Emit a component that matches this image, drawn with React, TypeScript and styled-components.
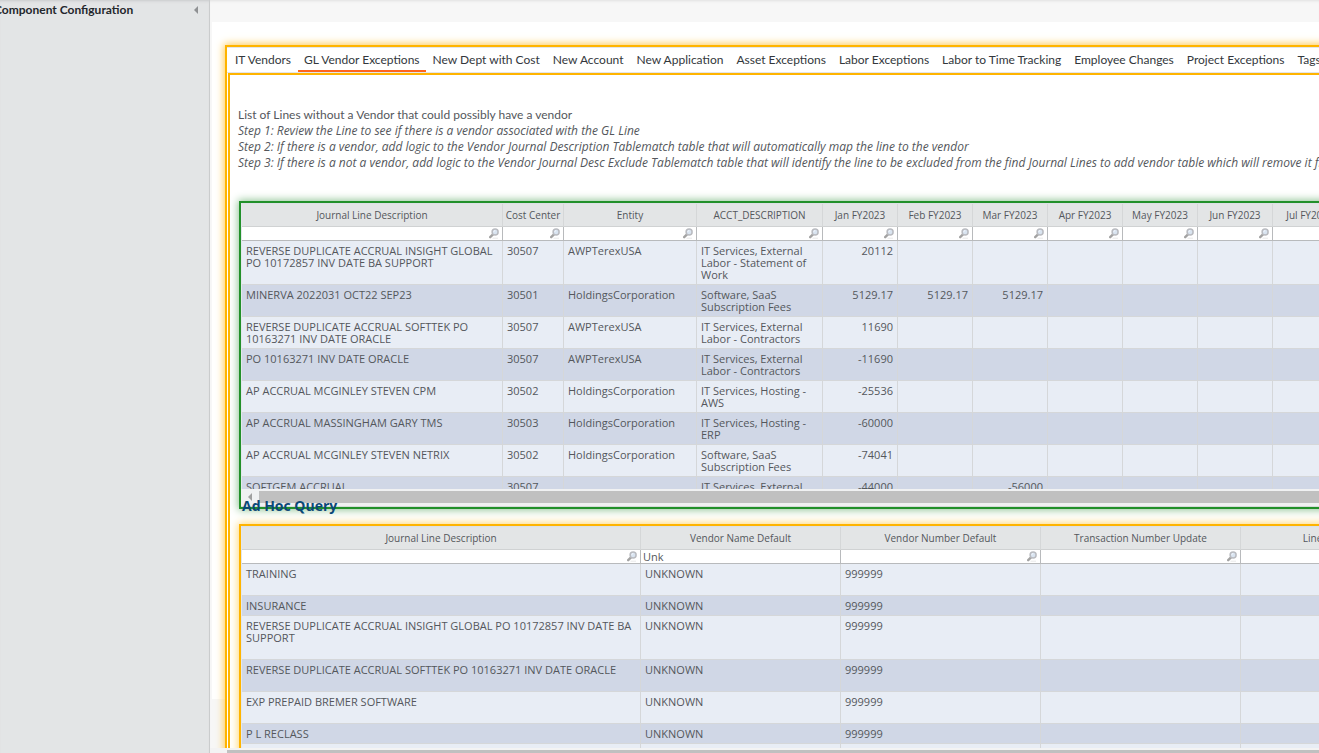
import React from "react";
import styled, { createGlobalStyle } from "styled-components";

const GlobalStyle = createGlobalStyle`
  *, *::before, *::after { box-sizing: border-box; }
  html, body { margin: 0; height: 100%; overflow: hidden; background: #fff; }
  body { font-family: "Open Sans", "Noto Sans", sans-serif; font-size: 12px; color: #54575c; }
`;

const Page = styled.div`
  display: flex;
  height: 100vh;
  overflow: hidden;
  background: #f7f7f7;
`;

const Sidebar = styled.aside`
  flex: 0 0 210px;
  background: #e3e5e6;
  border-right: 1px solid #cacccd;
  box-shadow: inset 0 3px 3px -2px #c8cacb;
  overflow: hidden;
`;

const SidebarHeader = styled.div`
  display: flex;
  align-items: center;
  justify-content: space-between;
  height: 20px;
  margin-left: -6px;
  padding-right: 11px;
`;

const SidebarTitle = styled.h1`
  margin: 0;
  font-family: Lato, "Open Sans", sans-serif;
  font-size: 12px;
  line-height: 20px;
  font-weight: 700;
  color: #23272c;
  white-space: nowrap;
`;

const CollapseButton = styled.button`
  display: flex;
  padding: 0;
  border: 0;
  background: none;
`;

const Main = styled.main`
  flex: 1;
  min-width: 0;
  display: flex;
  flex-direction: column;
  box-shadow: inset 0 3px 3px -2px #e0e0e0;
`;

const Workspace = styled.div`
  flex: 1;
  min-height: 0;
  overflow: hidden;
  padding: 22px 0 0 2px;
`;

const Sheet = styled.div`
  height: 677px;
  padding: 23px 0 0 13px;
  background: #fff;
`;

const TabPanelFrame = styled.section`
  width: 1400px;
  height: 900px;
  border: 2px solid #ffb400;
  box-shadow: 0 0 8px 1px #ffc94d;
  background: #fff;
`;

const Tabs = styled.nav`
  display: flex;
  gap: 1px;
  height: 26px;
  padding: 0 2px;
  border-top: 1px solid #e3e5ea;
  border-bottom: 1px solid #e3e5ea;
`;

const Tab = styled.button<{ $active?: boolean }>`
  padding: 2px 6px 0;
  border: 0;
  border-bottom: 2px solid ${(p) => (p.$active ? "#ff641e" : "transparent")};
  background: none;
  font-family: Lato, "Open Sans", sans-serif;
  font-size: 12px;
  line-height: 20px;
  color: #33373c;
  white-space: nowrap;
`;

const Panel = styled.div`
  height: 850px;
  margin-left: 1px;
  padding: 32px 0 0 8px;
  border: 2px solid #ffb400;
`;

const Notes = styled.div`
  height: 94px;
  font-size: 12px;
  line-height: 16px;
  white-space: nowrap;
`;

const NoteLine = styled.p`
  margin: 0;
`;

const NoteTitle = styled(NoteLine)`
  font-family: Lato, "Open Sans", sans-serif;
`;

const GridFrame = styled.section<{ $tone: string; $glow: string }>`
  margin-left: 1px;
  border: 2px solid ${(p) => p.$tone};
  box-shadow: 0 0 8px 1px ${(p) => p.$glow};
  background: #fff;
  overflow: hidden;
`;

const GridViewport = styled.div<{ $height: number }>`
  height: ${(p) => p.$height}px;
  overflow: hidden;
  border-left: 1px solid #e3e7ec;
  border-top: 1px solid #dde1e6;
`;

const Table = styled.table`
  table-layout: fixed;
  border-collapse: separate;
  border-spacing: 0;
  width: 1px;
`;

const HeadCell = styled.th`
  height: 23px;
  padding: 0 2px;
  background: #e3e5e6;
  border-right: 1px solid #d5d7d8;
  border-bottom: 1px solid #d0d2d3;
  font-size: 10px;
  line-height: 14px;
  font-weight: 400;
  text-align: center;
  white-space: nowrap;
`;

const FilterCell = styled.td`
  height: 14px;
  padding: 0;
  background: #fff;
  border-right: 1px solid #b8babc;
  border-bottom: 1px solid #b8babc;
`;

const FilterBox = styled.label`
  display: flex;
  align-items: center;
  height: 13px;
  padding-right: 3px;
`;

const FilterInput = styled.input`
  flex: 1;
  min-width: 0;
  width: 100%;
  height: 13px;
  padding: 0 2px;
  border: 0;
  outline: 0;
  background: transparent;
  font: inherit;
  font-size: 11px;
  color: #54575c;
`;

const Row = styled.tr<{ $height: number }>`
  height: ${(p) => p.$height}px;
  background: #e8edf5;
  &:nth-child(even) { background: #d0d7e6; }
`;

const Cell = styled.td<{ $numeric?: boolean }>`
  padding: 4px 4px 0;
  border-right: 1px solid #d5d7d9;
  border-bottom: 1px solid #d5d7d9;
  font-size: 11px;
  line-height: 12px;
  vertical-align: top;
  text-align: ${(p) => (p.$numeric ? "right" : "left")};
`;

const ScrollTrack = styled.div`
  display: flex;
  align-items: center;
  height: 18px;
  padding: 2px 0 3px;
  background: #f0f1f2;
  border-bottom: 1px solid #d5dbd8;
`;

const ScrollArrow = styled.button`
  display: flex;
  justify-content: center;
  width: 18px;
  padding: 0;
  border: 0;
  background: none;
`;

const ScrollThumb = styled.div`
  flex: 1;
  align-self: stretch;
  background: #c0c0c0;
`;

const QueryTitle = styled.h2`
  position: relative;
  z-index: 1;
  margin: -15px 0 6px 4px;
  font-size: 14px;
  line-height: 24px;
  font-weight: 700;
  color: #0b4877;
`;

const PageScroll = styled.div`
  height: 5px;
  padding: 2px 0 0 17px;
  background: #f3f3f3;
`;

const PageThumb = styled.div`
  height: 3px;
  background: #c0c0c0;
`;

const LeftArrow = ({ color, size }: { color: string; size: number }) => (
  <svg width={size / 2} height={size} viewBox="0 0 5 10" aria-hidden="true">
    <path d="M5 0V10L0 5Z" fill={color} />
  </svg>
);

const Magnifier = () => (
  <svg width="10" height="11" viewBox="0 0 10 11" aria-hidden="true">
    <path d="M1.2 9.2 4 6.4" stroke="#a3a3a3" strokeWidth="2.4" strokeLinecap="round" />
    <path d="M3.5 10.2H9" stroke="#e8e8e8" strokeWidth="1" />
    <circle cx="6.1" cy="4" r="3" fill="#d9e4f0" stroke="#b9bbc0" strokeWidth="1.5" />
    <path d="M4.8 3.8A1.5 1.5 0 0 1 6.2 2.5" stroke="#f6faff" strokeWidth="1" fill="none" />
  </svg>
);

type Column = { title: string; width: number; numeric?: boolean; filter?: string };
type GridRow = { height: number; cells: string[] };

const tabs = [
  "IT Vendors", "GL Vendor Exceptions", "New Dept with Cost", "New Account", "New Application",
  "Asset Exceptions", "Labor Exceptions", "Labor to Time Tracking", "Employee Changes",
  "Project Exceptions", "Tags",
];

const journalColumns: Column[] = [
  { title: "Journal Line Description", width: 261 },
  { title: "Cost Center", width: 61 },
  { title: "Entity", width: 133 },
  { title: "ACCT_DESCRIPTION", width: 126 },
  ...["Jan", "Feb", "Mar", "Apr", "May", "Jun", "Jul"].map((m) => ({
    title: `${m} FY2023`, width: 75, numeric: true,
  })),
];

const journalRows: GridRow[] = [
  { height: 44, cells: ["REVERSE DUPLICATE ACCRUAL INSIGHT GLOBAL PO 10172857 INV DATE BA SUPPORT", "30507", "AWPTerexUSA", "IT Services, External Labor - Statement of Work", "20112"] },
  { height: 32, cells: ["MINERVA 2022031 OCT22 SEP23", "30501", "HoldingsCorporation", "Software, SaaS Subscription Fees", "5129.17", "5129.17", "5129.17"] },
  { height: 32, cells: ["REVERSE DUPLICATE ACCRUAL SOFTTEK PO 10163271 INV DATE ORACLE", "30507", "AWPTerexUSA", "IT Services, External Labor - Contractors", "11690"] },
  { height: 32, cells: ["PO 10163271 INV DATE ORACLE", "30507", "AWPTerexUSA", "IT Services, External Labor - Contractors", "-11690"] },
  { height: 32, cells: ["AP ACCRUAL MCGINLEY STEVEN CPM", "30502", "HoldingsCorporation", "IT Services, Hosting - AWS", "-25536"] },
  { height: 32, cells: ["AP ACCRUAL MASSINGHAM GARY TMS", "30503", "HoldingsCorporation", "IT Services, Hosting - ERP", "-60000"] },
  { height: 32, cells: ["AP ACCRUAL MCGINLEY STEVEN NETRIX", "30502", "HoldingsCorporation", "Software, SaaS Subscription Fees", "-74041"] },
  { height: 32, cells: ["SOFTGEM ACCRUAL", "30507", "", "IT Services, External", "-44000", "", "-56000"] },
];

const queryColumns: Column[] = [
  { title: "Journal Line Description", width: 399 },
  { title: "Vendor Name Default", width: 200, filter: "Unk" },
  { title: "Vendor Number Default", width: 200 },
  { title: "Transaction Number Update", width: 200 },
  { title: "Line Description", width: 200 },
];

const queryRows: GridRow[] = [
  { height: 32, cells: ["TRAINING", "UNKNOWN", "999999"] },
  { height: 20, cells: ["INSURANCE", "UNKNOWN", "999999"] },
  { height: 44, cells: ["REVERSE DUPLICATE ACCRUAL INSIGHT GLOBAL PO 10172857 INV DATE BA SUPPORT", "UNKNOWN", "999999"] },
  { height: 32, cells: ["REVERSE DUPLICATE ACCRUAL SOFTTEK PO 10163271 INV DATE ORACLE", "UNKNOWN", "999999"] },
  { height: 32, cells: ["EXP PREPAID BREMER SOFTWARE", "UNKNOWN", "999999"] },
  { height: 20, cells: ["P L RECLASS", "UNKNOWN", "999999"] },
  { height: 32, cells: [] },
];

const DataGrid = ({ columns, rows }: { columns: Column[]; rows: GridRow[] }) => (
  <Table>
    <colgroup>
      {columns.map((c) => <col key={c.title} width={c.width} />)}
    </colgroup>
    <thead>
      <tr>{columns.map((c) => <HeadCell key={c.title} scope="col">{c.title}</HeadCell>)}</tr>
      <tr>
        {columns.map((c) => (
          <FilterCell key={c.title}>
            <FilterBox>
              <FilterInput type="text" defaultValue={c.filter} aria-label={`Filter ${c.title}`} />
              {!c.filter && <Magnifier />}
            </FilterBox>
          </FilterCell>
        ))}
      </tr>
    </thead>
    <tbody>
      {rows.map((r, i) => (
        <Row key={i} $height={r.height}>
          {columns.map((c, j) => <Cell key={c.title} $numeric={c.numeric}>{r.cells[j]}</Cell>)}
        </Row>
      ))}
    </tbody>
  </Table>
);

export default function App() {
  return (
    <Page>
      <GlobalStyle />
      <Sidebar>
        <SidebarHeader>
          <SidebarTitle>Component Configuration</SidebarTitle>
          <CollapseButton aria-label="Collapse sidebar"><LeftArrow color="#8f9193" size={8} /></CollapseButton>
        </SidebarHeader>
      </Sidebar>
      <Main>
        <Workspace>
          <Sheet>
            <TabPanelFrame>
              <Tabs>
                {tabs.map((t) => <Tab key={t} $active={t === "GL Vendor Exceptions"}>{t}</Tab>)}
              </Tabs>
              <Panel>
                <Notes>
                  <NoteTitle>List of Lines without a Vendor that could possibly have a vendor</NoteTitle>
                  <NoteLine><em>Step 1: Review the Line to see if there is a vendor associated with the GL Line</em></NoteLine>
                  <NoteLine><em>Step 2: If there is a vendor, add logic to the Vendor Journal Description Tablematch table that will automatically map the line to the vendor</em></NoteLine>
                  <NoteLine><em>Step 3: If there is a not a vendor, add logic to the Vendor Journal Desc Exclude Tablematch table that will identify the line to be excluded from the find Journal Lines to add vendor table which will remove it from</em></NoteLine>
                </Notes>
                <GridFrame $tone="#22902a" $glow="#8fc494">
                  <GridViewport $height={286}>
                    <DataGrid columns={journalColumns} rows={journalRows} />
                  </GridViewport>
                  <ScrollTrack>
                    <ScrollArrow aria-label="Scroll left"><LeftArrow color="#a0a0a0" size={8} /></ScrollArrow>
                    <ScrollThumb />
                  </ScrollTrack>
                </GridFrame>
                <QueryTitle>Ad Hoc Query</QueryTitle>
                <GridFrame $tone="#ffb400" $glow="#ffd877">
                  <GridViewport $height={320}>
                    <DataGrid columns={queryColumns} rows={queryRows} />
                  </GridViewport>
                </GridFrame>
              </Panel>
            </TabPanelFrame>
          </Sheet>
        </Workspace>
        <PageScroll><PageThumb /></PageScroll>
      </Main>
    </Page>
  );
}
